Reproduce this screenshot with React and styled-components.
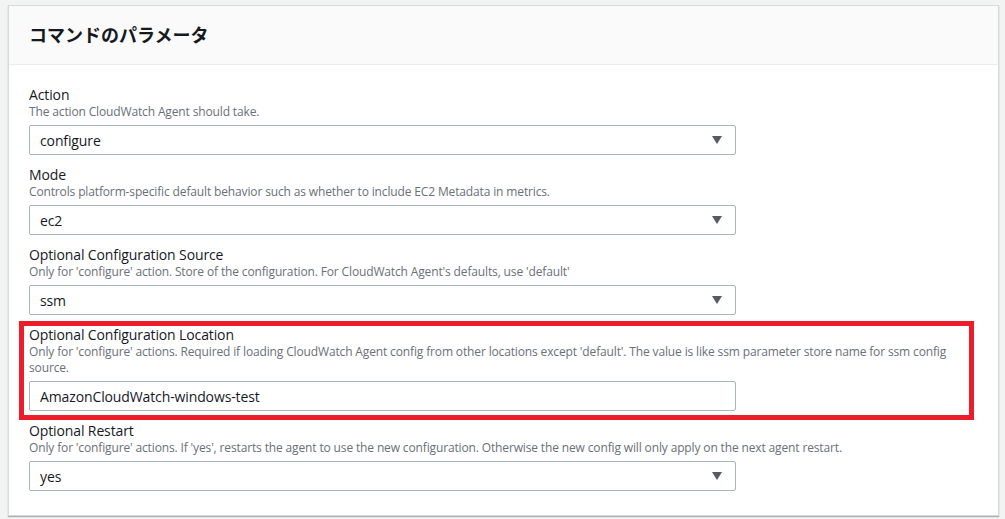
import styled, { createGlobalStyle } from "styled-components";

const GlobalStyle = createGlobalStyle`
    html, body {
        margin: 0;
        padding: 0;
        background: #f2f3f3;
        font-family: "Open Sans", "Noto Sans CJK JP", sans-serif;
        color: #16191f;
    }
`;

const Page = styled.div`
    padding: 5px 6px 4px 8px;
`;

const Card = styled.section`
    background: #ffffff;
    border: 1px solid #d5dbdb;
    box-shadow: 0 1px 1px rgba(0, 28, 36, 0.3);
`;

const Header = styled.header`
    height: 59px;
    box-sizing: border-box;
    display: flex;
    align-items: center;
    padding: 0 20px 3px 20px;
    background: #fafafa;
    border-bottom: 1px solid #eaeded;
`;

const Title = styled.h2`
    margin: 0;
    font-family: "Noto Sans CJK JP", sans-serif;
    font-size: 18px;
    font-weight: 700;
    color: #16191f;
`;

const Body = styled.div`
    padding: 21px 20px 24px 20px;
    display: flex;
    flex-direction: column;
    gap: 11px;
`;

const Field = styled.div`
    position: relative;
    display: flex;
    flex-direction: column;
`;

const Label = styled.label`
    font-size: 14px;
    line-height: 18px;
    letter-spacing: -0.12px;
    color: #16191f;
`;

const Description = styled.div`
    font-size: 12px;
    line-height: 16px;
    letter-spacing: -0.14px;
    color: #687078;
    margin-bottom: 5px;
`;

const Box = styled.div`
    width: 707px;
    height: 30px;
    box-sizing: border-box;
    border: 1px solid #aab7b8;
    border-radius: 2px;
    display: flex;
    align-items: center;
    justify-content: space-between;
    padding: 0 13px 0 10px;
    font-size: 14px;
    letter-spacing: -0.12px;
    color: #16191f;
    background: #fff;
`;

const Arrow = styled.span`
    width: 0;
    height: 0;
    border-left: 5px solid transparent;
    border-right: 5px solid transparent;
    border-top: 8px solid #545b64;
`;

const Highlight = styled.div`
    position: absolute;
    top: -5px;
    left: -10px;
    width: 955px;
    bottom: -9px;
    box-sizing: border-box;
    border: 5px solid #ec1c2b;
    pointer-events: none;
`;

const fields = [
    {
        label: "Action",
        desc: "The action CloudWatch Agent should take.",
        value: "configure",
        select: true,
    },
    {
        label: "Mode",
        desc: "Controls platform-specific default behavior such as whether to include EC2 Metadata in metrics.",
        value: "ec2",
        select: true,
    },
    {
        label: "Optional Configuration Source",
        desc: "Only for 'configure' action. Store of the configuration. For CloudWatch Agent's defaults, use 'default'",
        value: "ssm",
        select: true,
    },
    {
        label: "Optional Configuration Location",
        desc: "Only for 'configure' actions. Required if loading CloudWatch Agent config from other locations except 'default'. The value is like ssm parameter store name for ssm config source.",
        value: "AmazonCloudWatch-windows-test",
        highlight: true,
    },
    {
        label: "Optional Restart",
        desc: "Only for 'configure' actions. If 'yes', restarts the agent to use the new configuration. Otherwise the new config will only apply on the next agent restart.",
        value: "yes",
        select: true,
    },
];

const App = () => {
    return (
        <Page>
            <GlobalStyle />
            <Card>
                <Header>
                    <Title>コマンドのパラメータ</Title>
                </Header>
                <Body>
                    {fields.map((f) => (
                        <Field key={f.label}>
                            <Label>{f.label}</Label>
                            <Description>{f.desc}</Description>
                            <Box>
                                <span>{f.value}</span>
                                {f.select && <Arrow />}
                            </Box>
                            {f.highlight && <Highlight />}
                        </Field>
                    ))}
                </Body>
            </Card>
        </Page>
    );
};

export default App;
